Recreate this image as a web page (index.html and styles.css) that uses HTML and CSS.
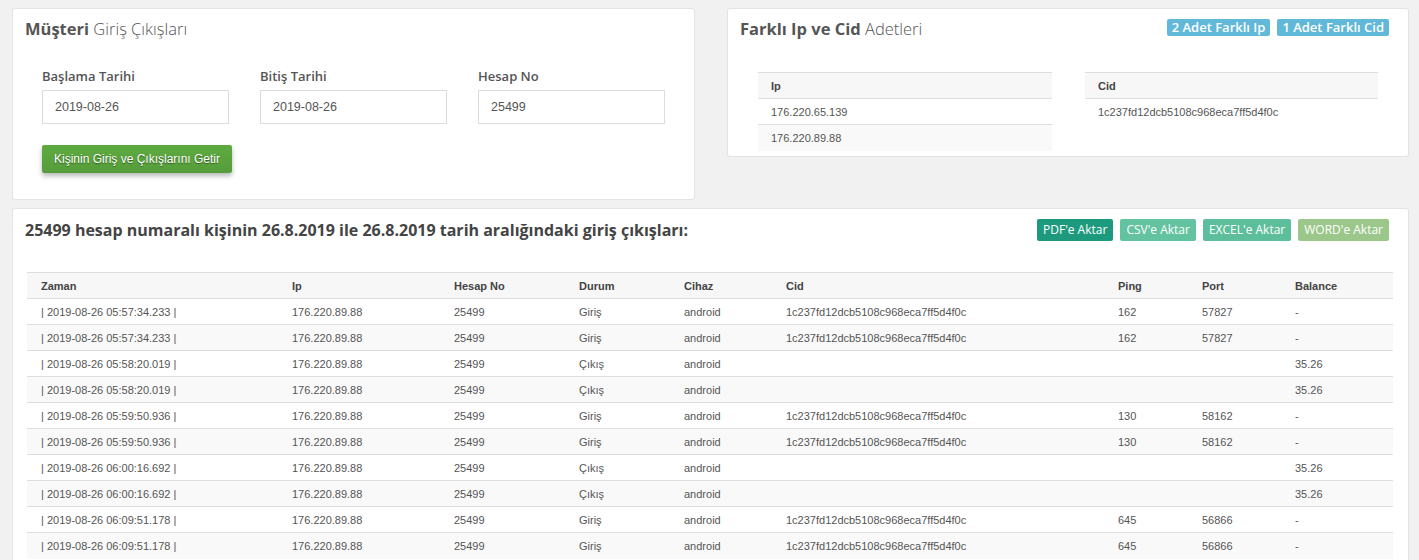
FILE: index.html
```html
<!DOCTYPE html>
<html lang="tr">
<head>
<meta charset="utf-8">
<title>Müşteri Giriş Çıkışları</title>
<link rel="stylesheet" href="styles.css">
</head>
<body>
<div class="page">
  <div class="top-row">
    <section class="panel panel-form">
      <h2 class="panel-title"><b>Müşteri</b> Giriş Çıkışları</h2>
      <div class="form-grid">
        <div class="field">
          <label class="field-label">Başlama Tarihi</label>
          <div class="input">2019-08-26</div>
        </div>
        <div class="field">
          <label class="field-label">Bitiş Tarihi</label>
          <div class="input">2019-08-26</div>
        </div>
        <div class="field">
          <label class="field-label">Hesap No</label>
          <div class="input">25499</div>
        </div>
      </div>
      <button class="btn-green">Kişinin Giriş ve Çıkışlarını Getir</button>
    </section>

    <section class="panel panel-diff">
      <div class="panel-head">
        <h2 class="panel-title"><b>Farklı Ip ve Cid</b> Adetleri</h2>
        <div class="badges">
          <span class="badge">2 Adet Farklı Ip</span>
          <span class="badge">1 Adet Farklı Cid</span>
        </div>
      </div>
      <div class="diff-grid">
        <table class="tbl">
          <thead><tr><th>Ip</th></tr></thead>
          <tbody>
            <tr><td>176.220.65.139</td></tr>
            <tr><td>176.220.89.88</td></tr>
          </tbody>
        </table>
        <table class="tbl">
          <thead><tr><th>Cid</th></tr></thead>
          <tbody>
            <tr><td>1c237fd12dcb5108c968eca7ff5d4f0c</td></tr>
          </tbody>
        </table>
      </div>
    </section>
  </div>

  <section class="panel panel-list">
    <div class="panel-head list-head">
      <h2 class="list-title">25499 hesap numaralı kişinin 26.8.2019 ile 26.8.2019 tarih aralığındaki giriş çıkışları:</h2>
      <div class="exports">
        <span class="exp exp-pdf">PDF'e Aktar</span>
        <span class="exp exp-csv">CSV'e Aktar</span>
        <span class="exp exp-excel">EXCEL'e Aktar</span>
        <span class="exp exp-word">WORD'e Aktar</span>
      </div>
    </div>
    <table class="tbl tbl-main">
      <colgroup>
        <col class="c-zaman"><col class="c-ip"><col class="c-hesap"><col class="c-durum"><col class="c-cihaz"><col class="c-cid"><col class="c-ping"><col class="c-port"><col class="c-bal">
      </colgroup>
      <thead>
        <tr><th>Zaman</th><th>Ip</th><th>Hesap No</th><th>Durum</th><th>Cihaz</th><th>Cid</th><th>Ping</th><th>Port</th><th>Balance</th></tr>
      </thead>
      <tbody>
        <tr><td>| 2019-08-26 05:57:34.233 |</td><td>176.220.89.88</td><td>25499</td><td>Giriş</td><td>android</td><td>1c237fd12dcb5108c968eca7ff5d4f0c</td><td>162</td><td>57827</td><td>-</td></tr>
        <tr><td>| 2019-08-26 05:57:34.233 |</td><td>176.220.89.88</td><td>25499</td><td>Giriş</td><td>android</td><td>1c237fd12dcb5108c968eca7ff5d4f0c</td><td>162</td><td>57827</td><td>-</td></tr>
        <tr><td>| 2019-08-26 05:58:20.019 |</td><td>176.220.89.88</td><td>25499</td><td>Çıkış</td><td>android</td><td></td><td></td><td></td><td>35.26</td></tr>
        <tr><td>| 2019-08-26 05:58:20.019 |</td><td>176.220.89.88</td><td>25499</td><td>Çıkış</td><td>android</td><td></td><td></td><td></td><td>35.26</td></tr>
        <tr><td>| 2019-08-26 05:59:50.936 |</td><td>176.220.89.88</td><td>25499</td><td>Giriş</td><td>android</td><td>1c237fd12dcb5108c968eca7ff5d4f0c</td><td>130</td><td>58162</td><td>-</td></tr>
        <tr><td>| 2019-08-26 05:59:50.936 |</td><td>176.220.89.88</td><td>25499</td><td>Giriş</td><td>android</td><td>1c237fd12dcb5108c968eca7ff5d4f0c</td><td>130</td><td>58162</td><td>-</td></tr>
        <tr><td>| 2019-08-26 06:00:16.692 |</td><td>176.220.89.88</td><td>25499</td><td>Çıkış</td><td>android</td><td></td><td></td><td></td><td>35.26</td></tr>
        <tr><td>| 2019-08-26 06:00:16.692 |</td><td>176.220.89.88</td><td>25499</td><td>Çıkış</td><td>android</td><td></td><td></td><td></td><td>35.26</td></tr>
        <tr><td>| 2019-08-26 06:09:51.178 |</td><td>176.220.89.88</td><td>25499</td><td>Giriş</td><td>android</td><td>1c237fd12dcb5108c968eca7ff5d4f0c</td><td>645</td><td>56866</td><td>-</td></tr>
        <tr><td>| 2019-08-26 06:09:51.178 |</td><td>176.220.89.88</td><td>25499</td><td>Giriş</td><td>android</td><td>1c237fd12dcb5108c968eca7ff5d4f0c</td><td>645</td><td>56866</td><td>-</td></tr>
      </tbody>
    </table>
  </section>
</div>
</body>
</html>
```

FILE: styles.css
```css
* { box-sizing: border-box; }

html, body {
  margin: 0;
  padding: 0;
  background: #f1f1f1;
  font-family: "Liberation Sans", Arial, sans-serif;
  color: #555;
}

.page {
  padding: 8px 10px 0 12px;
}

.top-row {
  display: flex;
  gap: 32px;
  align-items: flex-start;
}

.panel {
  background: #fff;
  border: 1px solid #e3e3e3;
  border-radius: 3px;
}

.panel-title {
  margin: 0;
  font-family: "Open Sans", sans-serif;
  font-size: 16.5px;
  font-weight: 300;
  line-height: 20px;
  color: #555;
}
.panel-title b {
  font-weight: 700;
}

/* Panel 1 */
.panel-form {
  flex: 0 0 683px;
  padding: 10px 13px 26px 12px;
}
.form-grid {
  display: grid;
  grid-template-columns: repeat(3, 187px);
  column-gap: 31px;
  margin: 28px 0 0 17px;
}
.field-label {
  display: block;
  font-family: "Open Sans", sans-serif;
  font-weight: 600;
  font-size: 13px;
  line-height: 18px;
  color: #555;
  margin-bottom: 5px;
}
.input {
  height: 34px;
  border: 1px solid #dcdcdc;
  padding: 0 12px;
  font-size: 12.5px;
  line-height: 32px;
  color: #555;
}
.btn-green {
  display: block;
  margin: 21px 0 0 17px;
  width: 190px;
  height: 28px;
  padding: 0;
  border: none;
  border-radius: 2px;
  background: linear-gradient(#5eaa41, #559c3a);
  color: #fff;
  font-family: "Liberation Sans", Arial, sans-serif;
  font-size: 12px;
  text-shadow: 0 1px 1px rgba(0,0,0,0.45);
  box-shadow: 0 3px 5px rgba(0,0,0,0.28);
}

/* Panel 2 */
.panel-diff {
  flex: 1 1 0;
  padding: 10px 19px 5px 12px;
}
.panel-head {
  display: flex;
  justify-content: space-between;
  align-items: flex-start;
}
.badges {
  display: flex;
  gap: 7px;
}
.badge {
  display: inline-block;
  background: #62b8d8;
  color: #fff;
  font-family: "Open Sans", sans-serif;
  font-weight: 600;
  font-size: 13px;
  line-height: 17px;
  padding: 0 5px;
  border-radius: 2px;
}
.diff-grid {
  display: grid;
  grid-template-columns: 294px 293px;
  column-gap: 33px;
  align-items: start;
  margin: 33px 0 0 18px;
}

/* Tables */
.tbl {
  width: 100%;
  border-collapse: collapse;
  font-family: "Liberation Sans", Arial, sans-serif;
  font-size: 11px;
  color: #555;
}
.tbl th {
  text-align: left;
  font-weight: 700;
  color: #444;
  background: #f7f7f7;
  height: 26px;
  padding: 0 13px;
  border-top: 1px solid #dedede;
  border-bottom: 1px solid #dedede;
}
.tbl td {
  height: 26px;
  padding: 0 13px;
  border-top: 1px solid #dedede;
  white-space: nowrap;
}
.tbl tbody tr:first-child td {
  border-top: none;
}
.tbl tbody tr:nth-child(even) td {
  background: #f9f9f9;
}

/* Panel 3 */
.panel-list {
  margin-top: 8px;
  padding: 9px 15px 10px 12px;
}
.list-head {
  padding-right: 4px;
}
.list-title {
  margin: 0;
  font-family: "Open Sans", sans-serif;
  font-weight: 700;
  font-size: 16px;
  line-height: 24px;
  color: #444;
}
.exports {
  display: flex;
  gap: 7px;
  margin-top: 1px;
}
.exp {
  display: inline-block;
  height: 22px;
  line-height: 22px;
  padding: 0 6px;
  border-radius: 2px;
  color: #fff;
  font-family: "Open Sans", sans-serif;
  font-size: 12px;
}
.exp-pdf { background: #1d9a7e; }
.exp-csv { background: #63c3a0; }
.exp-excel { background: #5dbe9c; }
.exp-word { background: #9bc78a; }

.tbl-main {
  margin: 30px 0 0 2px;
  table-layout: fixed;
  width: 1366px;
}
.tbl-main th, .tbl-main td { padding-left: 14px; }
.c-zaman { width: 251px; }
.c-ip { width: 162px; }
.c-hesap { width: 125px; }
.c-durum { width: 105px; }
.c-cihaz { width: 102px; }
.c-cid { width: 332px; }
.c-ping { width: 84px; }
.c-port { width: 93px; }
.c-bal { width: 112px; }
```
